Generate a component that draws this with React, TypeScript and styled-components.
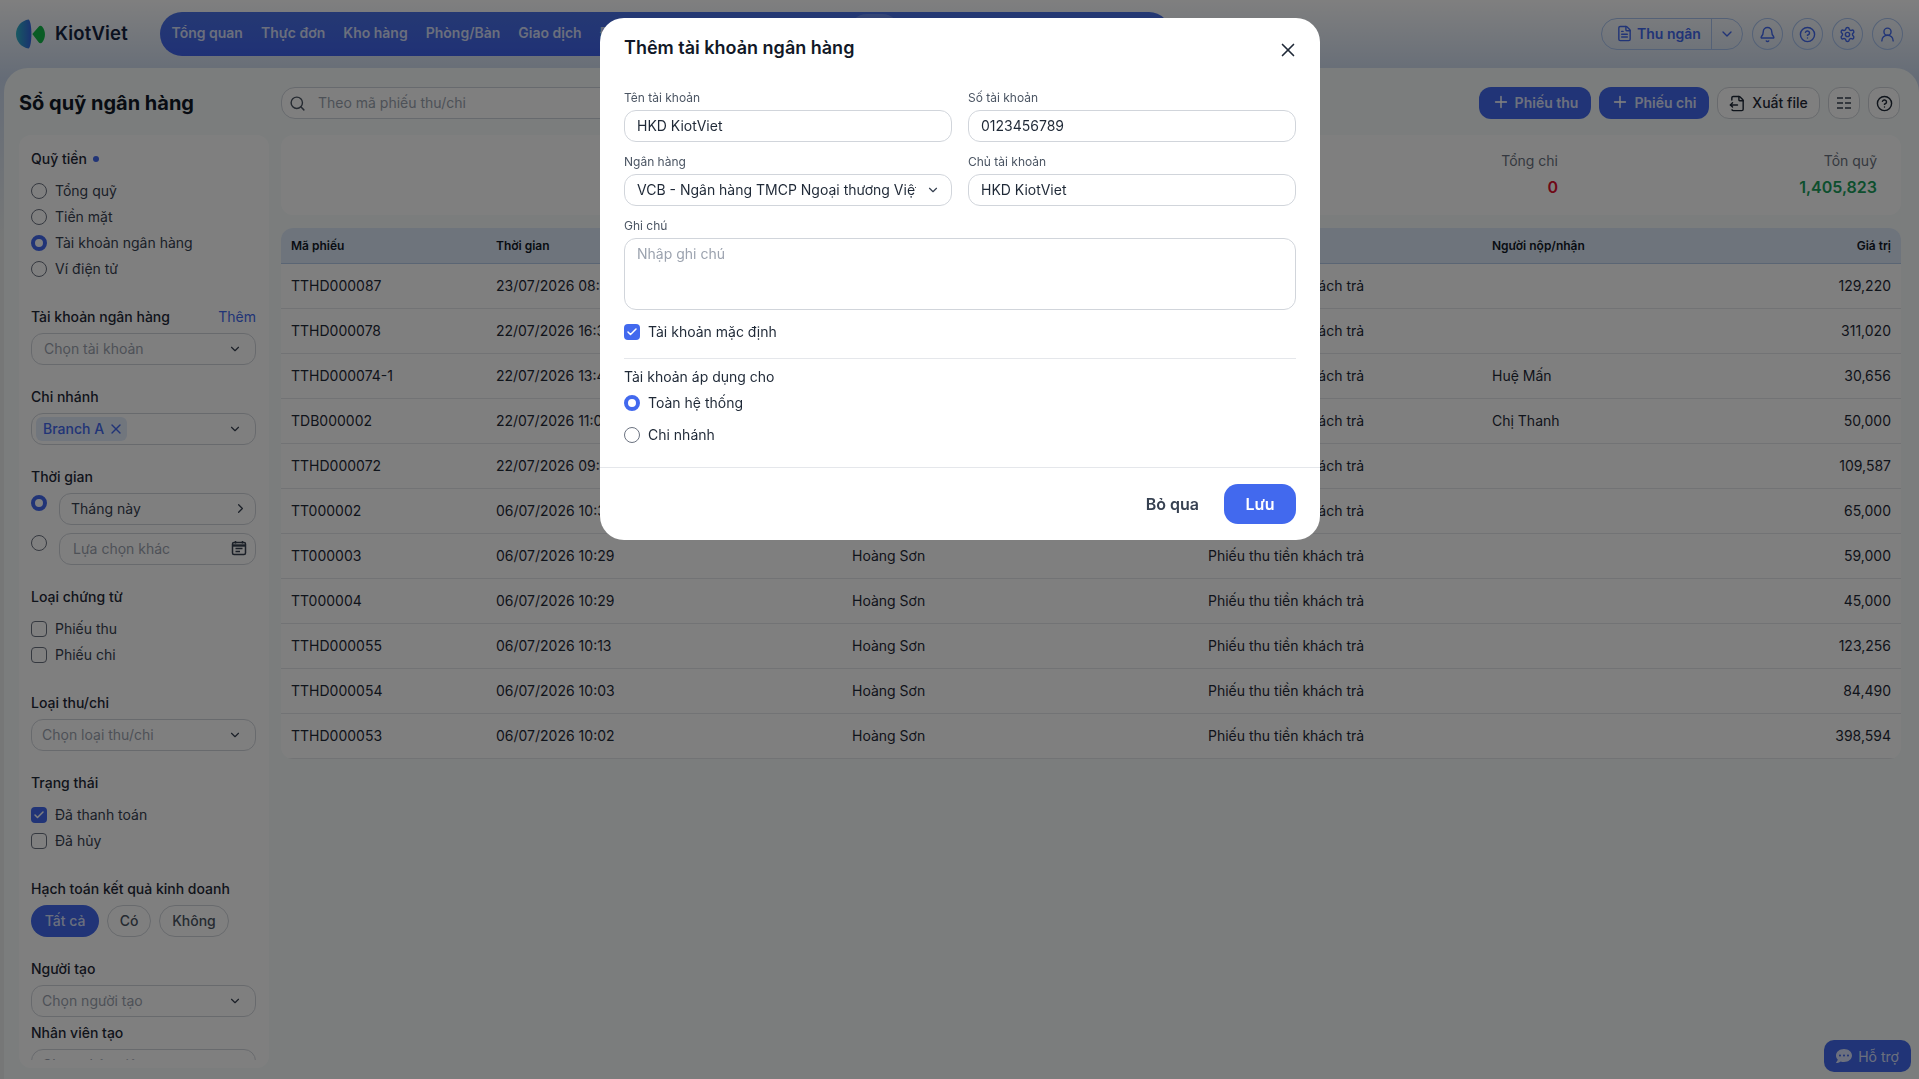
import React from "react";
import styled, { createGlobalStyle } from "styled-components";
import { Bell, Check, ChevronDown, ChevronRight, CircleHelp, FileOutput, FileText, Plus, Search, Settings, UserRound, X } from "lucide-react";
import { FaCommentDots } from "react-icons/fa";

const primary = "#4269ee";
const ink = "#1f2937";

const Global = createGlobalStyle`
  html, body { margin: 0; padding: 0; height: 100%; overflow: hidden; }
  body { font-family: Inter, "Noto Sans", "Liberation Sans", sans-serif; color: ${ink}; font-size: 14px; }
  * { box-sizing: border-box; }
`;

const Page = styled.div`
  width: 100vw; height: 100vh; display: flex; flex-direction: column; overflow: hidden;
  background: linear-gradient(180deg, #fff 0, #cbd9ee 78px, #ecefef 240px);
`;
const Header = styled.header`
  height: 68px; flex: none; display: flex; align-items: flex-start; padding: 0 16px;
`;
const Logo = styled.div`
  width: 112px; margin-right: 32px; margin-top: 18px; display: flex; align-items: center; gap: 9px; height: 32px;
`;
const LogoText = styled.span`
  font-size: 18.5px; font-weight: 600; color: #14233f; letter-spacing: 0.2px; margin-top: -2px;
`;
const Nav = styled.nav`
  width: 1011px; height: 44px; margin-top: 12px; padding: 0 11px 0 11.5px; border-radius: 22px; display: flex; align-items: center; gap: 18px;
  background: linear-gradient(180deg, #4a72e6, #4063ec);
`;
const NavItem = styled.span<{ $active?: boolean }>`
  font-size: 14px; font-weight: 600; white-space: nowrap; line-height: 38px; height: 40px;
  color: rgba(255,255,255,.78); border-radius: 18px;
  ${p => p.$active ? "background: rgba(255,255,255,.18); padding: 0 2px;" : ""}
`;
const HeaderRight = styled.div`
  margin-left: auto; margin-top: 18px; display: flex; gap: 9px; align-items: center;
`;
const Cashier = styled.div`
  width: 142px; height: 32px; border: 1px solid #a9c3ee; border-radius: 16px; display: flex; align-items: center; color: ${primary};
`;
const CashierMain = styled.div`
  flex: 1; height: 100%; display: flex; align-items: center; gap: 4px; padding: 0 0 2px 14px; font-weight: 600; border-right: 1px solid #a9c3ee;
`;
const CashierArrow = styled.div`
  width: 30px; display: flex; align-items: center; justify-content: center;
`;
const RoundIcon = styled.div`
  width: 31px; height: 32px; border-radius: 50%; border: 1px solid #a9c3ee; color: ${primary}; display: flex; align-items: center; justify-content: center;
`;
const Main = styled.main`
  flex: 1; min-height: 0; margin-left: 4px; padding: 19px 18px 11px 15px; border-radius: 24px 24px 0 0; background: #f6fbfa;
  display: grid; grid-template-columns: 250px 1fr; grid-template-rows: 32px 1fr; gap: 16px 12px;
`;
const Title = styled.h1`
  margin: 0; font-size: 20px; line-height: 32px; font-weight: 700; color: #111827; white-space: nowrap;
`;
const Toolbar = styled.div`
  display: flex; align-items: center; gap: 8px; margin-right: 1px;
`;
const SearchBox = styled.div`
  width: 700px; height: 32px; border: 1px solid #cfd4dc; border-radius: 14px; display: flex; align-items: center; padding: 0 0 2px 7px; gap: 12px; color: #9aa3af; margin-right: auto; background: #fff;
`;
const SearchIcon = styled(Search)`
  color: #4b5563; margin-top: 2px;
`;
const PrimaryButton = styled.button<{ $w: number }>`
  height: 32px; width: ${p => p.$w}px; border: 0; border-radius: 12px; background: ${primary}; color: rgba(255,255,255,.82); font: 600 14px Inter, sans-serif;
  display: flex; align-items: center; justify-content: center; gap: 5px; padding: 0 0 2px;
`;
const OutlineButton = styled.button<{ $w: number }>`
  height: 32px; width: ${p => p.$w}px; border: 1px solid #d1d5db; border-radius: 12px; background: #fff; color: ${ink}; font: 500 14px Inter, sans-serif;
  display: flex; align-items: center; justify-content: center; gap: 6px; padding: 0;
`;
const ButtonText = styled.span`
  margin-bottom: 2px;
`;
const Sidebar = styled.aside`
  border-radius: 12px; background: #fff; padding: 0 13px 8px 12px; min-height: 0; display: flex;
`;
const SideScroll = styled.div`
  flex: 1; overflow: hidden; padding-top: 14px;
`;
const Group = styled.section<{ $mt?: number }>`
  margin-top: ${p => p.$mt ?? 0}px; display: flex; flex-direction: column;
`;
const GroupLabel = styled.div`
  font-size: 14px; line-height: 20px; font-weight: 500; color: ${ink}; display: flex; align-items: center; justify-content: space-between; white-space: nowrap;
`;
const Dot = styled.i`
  display: inline-block; width: 6px; height: 6px; border-radius: 50%; background: ${primary}; margin-left: 6px;
`;
const LabelLeft = styled.span`
  display: flex; align-items: center;
`;
const AddLink = styled.span`
  color: ${primary}; font-weight: 400;
`;
const Options = styled.div`
  margin-top: 12px; display: flex; flex-direction: column; gap: 6px;
`;
const Option = styled.label`
  display: flex; align-items: center; gap: 8px; height: 20px; font-size: 14px; color: #374151; white-space: nowrap;
`;
const OptionText = styled.span`
  margin-bottom: 2px;
`;
const Radio = styled.span<{ $on?: boolean; $offset?: boolean }>`
  flex: none; width: 16px; height: 16px; border-radius: 50%; background: #fff;
  border: ${p => p.$on ? `4.5px solid ${primary}` : "1px solid #6b7280"};
  ${p => p.$offset ? "margin-top: 2px;" : ""}
`;
const BoxMark = styled.span<{ $on?: boolean }>`
  flex: none; width: 16px; height: 16px; border-radius: 4px; display: flex; align-items: center; justify-content: center; color: #fff;
  background: ${p => p.$on ? primary : "#fff"}; border: ${p => p.$on ? "0" : "1px solid #6b7280"};
`;
const SelectBox = styled.div<{ $pad?: number }>`
  margin-top: 6px; height: 32px; flex: none; border: 1px solid #d1d5db; border-radius: 12px; background: #fff; display: flex; align-items: center; justify-content: space-between;
  padding: 0 13px 2px ${p => p.$pad ?? 10}px; color: #9ca3af; font-size: 14px; white-space: nowrap;
`;
const Arrow = styled(ChevronDown)`
  color: #374151; flex: none; margin-top: 2px;
`;
const Tag = styled.span`
  height: 24px; width: 91px; border-radius: 6px; background: #e3ecfb; color: ${primary}; display: flex; align-items: center; gap: 4px; padding: 0 0 2px 7px; margin: 2px 0 0 -6px; font-size: 14px; font-weight: 500;
`;
const TagClose = styled(X)`
  margin-top: 2px;
`;
const TimeRow = styled.div<{ $mt: number }>`
  margin-top: ${p => p.$mt}px; display: flex; gap: 12px; align-items: flex-start;
`;
const TimeField = styled.div<{ $muted?: boolean }>`
  flex: 1; height: 32px; border: 1px solid #d1d5db; border-radius: 12px; background: #fff; display: flex; align-items: center; justify-content: space-between;
  padding: 0 ${p => p.$muted ? 8 : 7}px 2px ${p => p.$muted ? 13 : 11}px; color: ${p => p.$muted ? "#9ca3af" : "#374151"}; font-size: 14px;
`;
const Pills = styled.div`
  margin-top: 6px; display: flex; gap: 8px;
`;
const Pill = styled.span<{ $on?: boolean; $w: number }>`
  height: 32px; width: ${p => p.$w}px; border-radius: 16px; display: flex; align-items: center; justify-content: center; font-size: 14px; font-weight: 500; padding-bottom: 1px;
  ${p => p.$on ? `background:${primary}; color: rgba(255,255,255,.8);` : "border: 1px solid #d1d5db; color: #4b5563; background: #fff;"}
`;
const Content = styled.div`
  min-width: 0; display: flex; flex-direction: column; gap: 13px;
`;
const Summary = styled.div`
  height: 80px; flex: none; border-radius: 12px; background: #fff; padding: 16px 24px 0; display: flex; justify-content: flex-end;
`;
const Stat = styled.div`
  width: 319px; text-align: right;
`;
const StatLabel = styled.div`
  font-size: 14px; line-height: 20px; color: #6b7280;
`;
const StatValue = styled.div<{ $color: string }>`
  margin-top: 6px; font-size: 16px; line-height: 21px; font-weight: 600; color: ${p => p.$color};
`;
const Table = styled.div`
  border-radius: 12px; overflow: hidden; background: #fff; flex: none;
`;
const columns = "205px 356px 356px 284px 200px 1fr";
const HeadRow = styled.div`
  height: 36px; display: grid; grid-template-columns: ${columns}; align-items: center; padding: 0 10px 1px; background: #dde9f8; border-bottom: 1px solid #b5cbe8;
  font-size: 12px; font-weight: 600; color: #111827;
`;
const Row = styled.div`
  height: 45px; display: grid; grid-template-columns: ${columns}; align-items: center; padding: 0 10px 2px; border-bottom: 1px solid #e5e7eb; font-size: 14px; color: ${ink};
`;
const Amount = styled.span`
  text-align: right;
`;
const Support = styled.div`
  position: absolute; right: 8px; bottom: 7px; width: 87px; height: 32px; border-radius: 10px; background: ${primary}; color: rgba(255,255,255,.8); display: flex; align-items: center; justify-content: center; gap: 6px; font-size: 14px;
`;
const Overlay = styled.div`
  position: fixed; inset: 0; background: rgba(0,0,0,.5); backdrop-filter: blur(.6px); display: flex; justify-content: center; align-items: flex-start; padding: 18px 0 0 1px;
`;
const Modal = styled.div`
  width: 720px; height: 522px; background: #fff; border-radius: 24px; display: flex; flex-direction: column; color: ${ink};
`;
const ModalHead = styled.div`
  height: 60px; flex: none; padding: 18px 24px 0; display: flex; justify-content: space-between; align-items: flex-start;
`;
const ModalTitle = styled.h2`
  margin: 0; font-size: 18px; line-height: 24px; font-weight: 600; color: #111827;
`;
const CloseIcon = styled(X)`
  color: #1f2937; margin: 3px -3px 0 0;
`;
const ModalBody = styled.div`
  flex: 1; padding: 12px 24px 0;
`;
const FieldGrid = styled.div`
  display: grid; grid-template-columns: 1fr 1fr; gap: 12px 16px;
`;
const Field = styled.div<{ $wide?: boolean }>`
  display: flex; flex-direction: column; gap: 4px; min-width: 0; ${p => p.$wide ? "grid-column: 1 / -1;" : ""}
`;
const FieldLabel = styled.label`
  font-size: 12px; line-height: 16px; color: #4b5563;
`;
const TextBox = styled.div`
  height: 32px; border: 1px solid #d1d5db; border-radius: 12px; padding: 0 11px 2px 12px; display: flex; align-items: center; gap: 10px; font-size: 14px; color: ${ink}; min-width: 0;
`;
const Clip = styled.span`
  flex: 1; overflow: hidden; white-space: nowrap; min-width: 0;
`;
const TextArea = styled.div`
  height: 72px; border: 1px solid #d1d5db; border-radius: 12px; padding: 5px 12px; font-size: 14px; line-height: 20px; color: #9ca3af;
`;
const ModalCheck = styled(Option)`
  margin-top: 12px; color: ${ink};
`;
const Divider = styled.hr`
  margin: 16px 0 0; border: 0; border-top: 1px solid #e5e7eb;
`;
const ScopeTitle = styled.div`
  margin-top: 8px; font-size: 14px; line-height: 20px; color: ${ink};
`;
const ScopeOptions = styled.div`
  margin-top: 6px; display: flex; flex-direction: column; gap: 12px;
`;
const ScopeOption = styled(Option)`
  color: ${ink};
`;
const Footer = styled.div`
  flex: none; height: 73px; border-top: 1px solid #e5e7eb; padding: 16px 24px; display: flex; justify-content: flex-end; align-items: center; gap: 25px;
`;
const Skip = styled.button`
  border: 0; background: none; padding: 0; font: 600 16px Inter, sans-serif; color: #374151;
`;
const Save = styled.button`
  width: 72px; height: 40px; border: 0; border-radius: 14px; background: ${primary}; color: #fff; font: 600 16px Inter, sans-serif; padding: 0;
`;

const LogoMark = () => (
  <svg width="33" height="33" viewBox="16 18 33 33">
    <defs>
      <linearGradient id="lg" x1="0" x2="1" y1="0" y2="0">
        <stop offset="0" stopColor="#2fb3c4" />
        <stop offset="1" stopColor="#3463e0" />
      </linearGradient>
    </defs>
    <path d="M30 18C22 19 16 26 16 34s6 15 14 16c4-3 4-29 0-32z" fill="url(#lg)" />
    <path d="M34 34l7-8c1-1.5 3-1.5 4 0 4 5 4 12 0 17-1 1.5-3 1.5-4 0z" fill="#13b94a" />
  </svg>
);
const CalendarIcon = () => (
  <svg width="16" height="16" viewBox="0 0 16 16" fill="none" stroke="#374151" strokeWidth="1.5">
    <rect x="1.500" y="2.500" width="13" height="12" rx="1.500" />
    <path d="M1.500 5.500h13" strokeWidth="2.400" />
    <path d="M4.500 1v2.500M11.500 1v2.500M4.500 8.500h7M4.500 11.500h4.500" />
  </svg>
);
const ColumnsIcon = () => (
  <svg width="16" height="16" viewBox="0 0 16 16" fill="none" stroke="#374151" strokeWidth="1.7">
    <path d="M1 3h6M9 3h6M1 8h6M9 8h6M1 13h6M9 13h6" />
  </svg>
);

type R = [string, string, string, string, string, string];
const rows: R[] = [
  ["TTHD000087", "23/07/2026 08:32", "Hoàng Sơn", "Phiếu thu tiền khách trả", "", "129,220"],
  ["TTHD000078", "22/07/2026 16:30", "Hoàng Sơn", "Phiếu thu tiền khách trả", "", "311,020"],
  ["TTHD000074-1", "22/07/2026 13:42", "Hoàng Sơn", "Phiếu thu tiền khách trả", "Huệ Mấn", "30,656"],
  ["TDB000002", "22/07/2026 11:05", "Hoàng Sơn", "Phiếu thu tiền khách trả", "Chị Thanh", "50,000"],
  ["TTHD000072", "22/07/2026 09:18", "Hoàng Sơn", "Phiếu thu tiền khách trả", "", "109,587"],
  ["TT000002", "06/07/2026 10:30", "Hoàng Sơn", "Phiếu thu tiền khách trả", "", "65,000"],
  ["TT000003", "06/07/2026 10:29", "Hoàng Sơn", "Phiếu thu tiền khách trả", "", "59,000"],
  ["TT000004", "06/07/2026 10:29", "Hoàng Sơn", "Phiếu thu tiền khách trả", "", "45,000"],
  ["TTHD000055", "06/07/2026 10:13", "Hoàng Sơn", "Phiếu thu tiền khách trả", "", "123,256"],
  ["TTHD000054", "06/07/2026 10:03", "Hoàng Sơn", "Phiếu thu tiền khách trả", "", "84,490"],
  ["TTHD000053", "06/07/2026 10:02", "Hoàng Sơn", "Phiếu thu tiền khách trả", "", "398,594"],
];

const RadioOption = ({ on, children }: { on?: boolean; children: React.ReactNode }) => (
  <Option><Radio $on={on} /><OptionText>{children}</OptionText></Option>
);
const CheckOption = ({ on, children }: { on?: boolean; children: React.ReactNode }) => (
  <Option><BoxMark $on={on}>{on && <Check size={12} strokeWidth={3} />}</BoxMark><OptionText>{children}</OptionText></Option>
);

export default function App() {
  return (
    <Page>
      <Global />
      <Header>
        <Logo><LogoMark /><LogoText>KiotViet</LogoText></Logo>
        <Nav>
          <NavItem>Tổng quan</NavItem>
          <NavItem>Thực đơn</NavItem>
          <NavItem>Kho hàng</NavItem>
          <NavItem>Phòng/Bàn</NavItem>
          <NavItem>Giao dịch</NavItem>
          <NavItem>Đối tác</NavItem>
          <NavItem>Khách hàng</NavItem>
          <NavItem>Nhân viên</NavItem>
          <NavItem $active>Sổ quỹ</NavItem>
          <NavItem>Báo cáo</NavItem>
        </Nav>
        <HeaderRight>
          <Cashier>
            <CashierMain><FileText size={17} />Thu ngân</CashierMain>
            <CashierArrow><ChevronDown size={16} /></CashierArrow>
          </Cashier>
          <RoundIcon><Bell size={17} /></RoundIcon>
          <RoundIcon><CircleHelp size={17} /></RoundIcon>
          <RoundIcon><Settings size={17} /></RoundIcon>
          <RoundIcon><UserRound size={17} /></RoundIcon>
        </HeaderRight>
      </Header>
      <Main>
        <Title>Sổ quỹ ngân hàng</Title>
        <Toolbar>
          <SearchBox><SearchIcon size={17} />Theo mã phiếu thu/chi</SearchBox>
          <PrimaryButton $w={112}><Plus size={18} strokeWidth={2.4} />Phiếu thu</PrimaryButton>
          <PrimaryButton $w={110}><Plus size={18} strokeWidth={2.4} />Phiếu chi</PrimaryButton>
          <OutlineButton $w={103}><FileOutput size={17} /><ButtonText>Xuất file</ButtonText></OutlineButton>
          <OutlineButton $w={32}><ColumnsIcon /></OutlineButton>
          <OutlineButton $w={32}><CircleHelp size={17} /></OutlineButton>
        </Toolbar>
        <Sidebar>
          <SideScroll>
            <Group>
              <GroupLabel><LabelLeft>Quỹ tiền<Dot /></LabelLeft></GroupLabel>
              <Options>
                <RadioOption>Tổng quỹ</RadioOption>
                <RadioOption>Tiền mặt</RadioOption>
                <RadioOption on>Tài khoản ngân hàng</RadioOption>
                <RadioOption>Ví điện tử</RadioOption>
              </Options>
            </Group>
            <Group $mt={28}>
              <GroupLabel>Tài khoản ngân hàng<AddLink>Thêm</AddLink></GroupLabel>
              <SelectBox $pad={12}>Chọn tài khoản<Arrow size={14} /></SelectBox>
            </Group>
            <Group $mt={22}>
              <GroupLabel>Chi nhánh</GroupLabel>
              <SelectBox>
                <Tag>Branch A<TagClose size={16} /></Tag>
                <Arrow size={14} />
              </SelectBox>
            </Group>
            <Group $mt={22}>
              <GroupLabel>Thời gian</GroupLabel>
              <TimeRow $mt={6}>
                <Radio $on $offset />
                <TimeField>Tháng này<ChevronRight size={15} /></TimeField>
              </TimeRow>
              <TimeRow $mt={8}>
                <Radio $offset />
                <TimeField $muted>Lựa chọn khác<CalendarIcon /></TimeField>
              </TimeRow>
            </Group>
            <Group $mt={22}>
              <GroupLabel>Loại chứng từ</GroupLabel>
              <Options>
                <CheckOption>Phiếu thu</CheckOption>
                <CheckOption>Phiếu chi</CheckOption>
              </Options>
            </Group>
            <Group $mt={28}>
              <GroupLabel>Loại thu/chi</GroupLabel>
              <SelectBox>Chọn loại thu/chi<Arrow size={14} /></SelectBox>
            </Group>
            <Group $mt={22}>
              <GroupLabel>Trạng thái</GroupLabel>
              <Options>
                <CheckOption on>Đã thanh toán</CheckOption>
                <CheckOption>Đã hủy</CheckOption>
              </Options>
            </Group>
            <Group $mt={28}>
              <GroupLabel>Hạch toán kết quả kinh doanh</GroupLabel>
              <Pills>
                <Pill $on $w={68}>Tất cả</Pill>
                <Pill $w={44}>Có</Pill>
                <Pill $w={70}>Không</Pill>
              </Pills>
            </Group>
            <Group $mt={22}>
              <GroupLabel>Người tạo</GroupLabel>
              <SelectBox>Chọn người tạo<Arrow size={14} /></SelectBox>
            </Group>
            <Group $mt={6}>
              <GroupLabel>Nhân viên tạo</GroupLabel>
              <SelectBox>Chọn nhân viên<Arrow size={14} /></SelectBox>
            </Group>
          </SideScroll>
        </Sidebar>
        <Content>
          <Summary>
            <Stat><StatLabel>Tổng thu</StatLabel><StatValue $color="#1a9e5c">1,405,823</StatValue></Stat>
            <Stat><StatLabel>Tổng chi</StatLabel><StatValue $color="#e0102f">0</StatValue></Stat>
            <Stat><StatLabel>Tồn quỹ</StatLabel><StatValue $color="#1a9e5c">1,405,823</StatValue></Stat>
          </Summary>
          <Table>
            <HeadRow>
              <span>Mã phiếu</span><span>Thời gian</span><span>Người tạo</span><span>Loại thu/chi</span><span>Người nộp/nhận</span><Amount>Giá trị</Amount>
            </HeadRow>
            {rows.map(r => (
              <Row key={r[0]}>
                <span>{r[0]}</span><span>{r[1]}</span><span>{r[2]}</span><span>{r[3]}</span><span>{r[4]}</span><Amount>{r[5]}</Amount>
              </Row>
            ))}
          </Table>
        </Content>
      </Main>
      <Support><FaCommentDots size={16} />Hỗ trợ</Support>
      <Overlay>
        <Modal>
          <ModalHead>
            <ModalTitle>Thêm tài khoản ngân hàng</ModalTitle>
            <CloseIcon size={22} strokeWidth={1.8} />
          </ModalHead>
          <ModalBody>
            <FieldGrid>
              <Field><FieldLabel>Tên tài khoản</FieldLabel><TextBox>HKD KiotViet</TextBox></Field>
              <Field><FieldLabel>Số tài khoản</FieldLabel><TextBox>0123456789</TextBox></Field>
              <Field>
                <FieldLabel>Ngân hàng</FieldLabel>
                <TextBox><Clip>VCB - Ngân hàng TMCP Ngoại thương Việt Nam</Clip><Arrow size={14} /></TextBox>
              </Field>
              <Field><FieldLabel>Chủ tài khoản</FieldLabel><TextBox>HKD KiotViet</TextBox></Field>
              <Field $wide><FieldLabel>Ghi chú</FieldLabel><TextArea>Nhập ghi chú</TextArea></Field>
            </FieldGrid>
            <ModalCheck><BoxMark $on><Check size={12} strokeWidth={3} /></BoxMark><OptionText>Tài khoản mặc định</OptionText></ModalCheck>
            <Divider />
            <ScopeTitle>Tài khoản áp dụng cho</ScopeTitle>
            <ScopeOptions>
              <ScopeOption><Radio $on /><OptionText>Toàn hệ thống</OptionText></ScopeOption>
              <ScopeOption><Radio /><OptionText>Chi nhánh</OptionText></ScopeOption>
            </ScopeOptions>
          </ModalBody>
          <Footer>
            <Skip>Bỏ qua</Skip>
            <Save>Lưu</Save>
          </Footer>
        </Modal>
      </Overlay>
    </Page>
  );
}
